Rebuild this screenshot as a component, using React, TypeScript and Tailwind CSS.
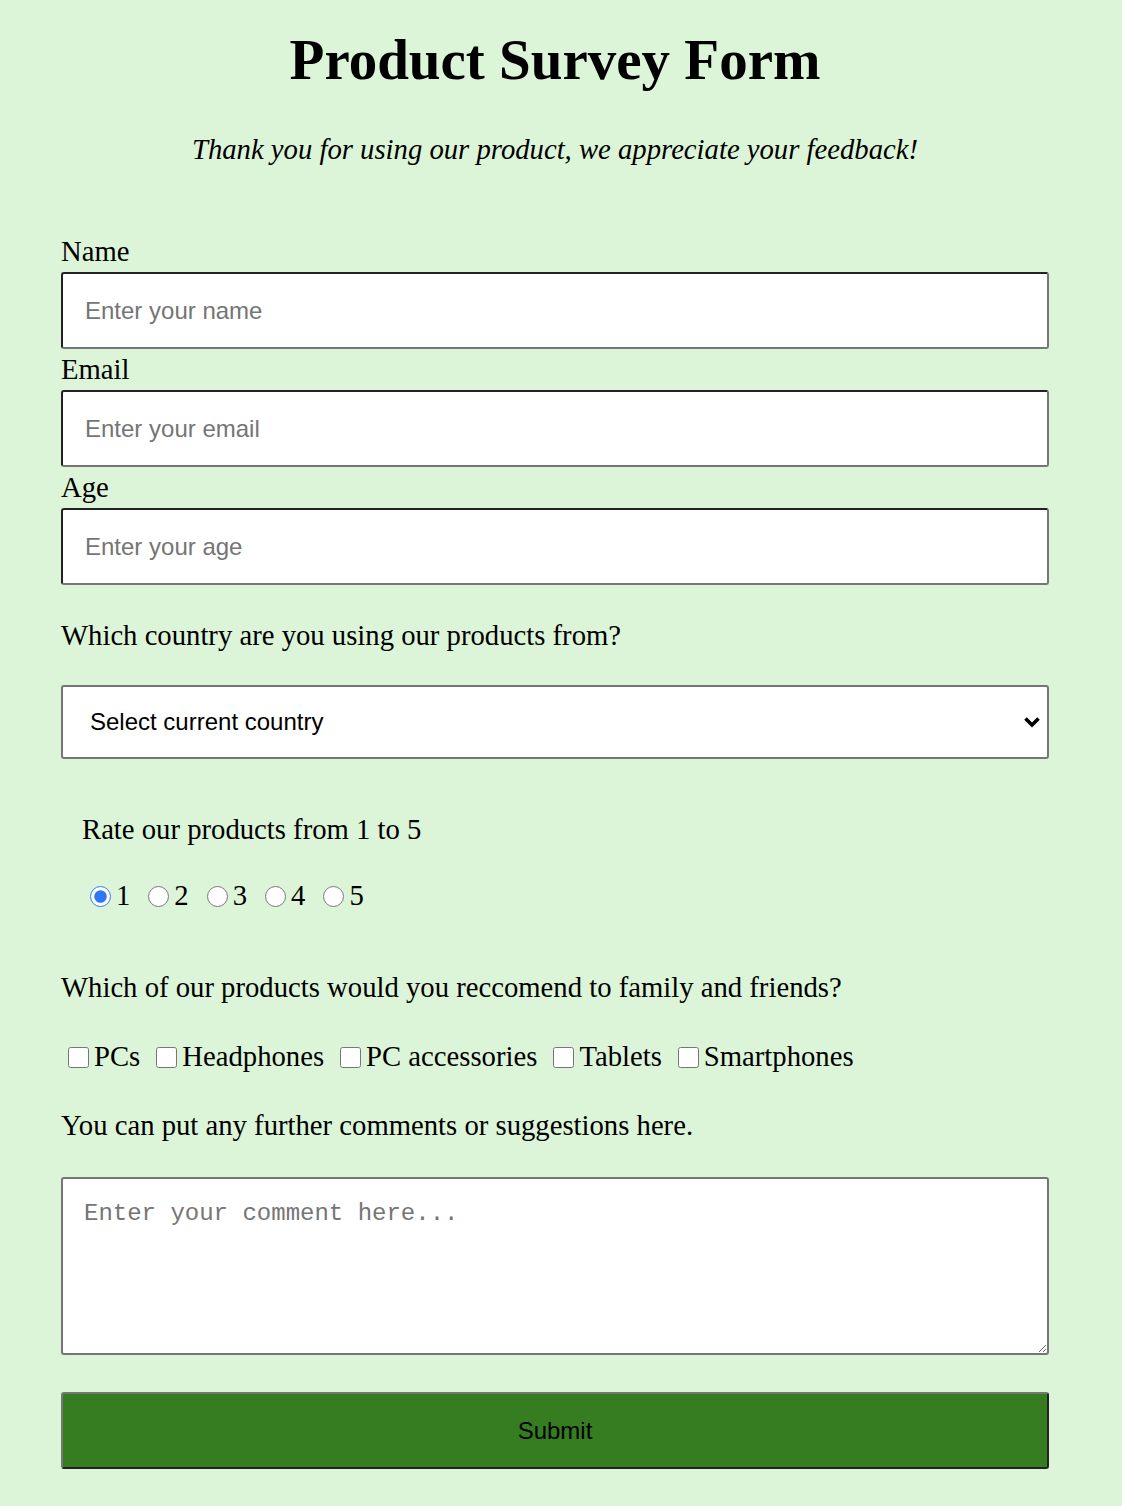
import React, { useState } from 'react';

const serif = "font-['Liberation_Serif','Times_New_Roman',serif]";

const ratings = [1, 2, 3, 4, 5];
const products = ['PCs', 'Headphones', 'PC accessories', 'Tablets', 'Smartphones'];

const SurveyForm = () => {
  const [rating, setRating] = useState(1);

  return (
    <div className={`min-h-screen bg-[#dcf5d8] text-black ${serif} text-[28.7px]`}>
      <div className="ml-[61px] w-[988px] pt-[25px]">
        {/* Header */}
        <h1 className="text-center text-[57px] font-bold leading-[70px]">Product Survey Form</h1>
        <p className="mt-[36px] text-center italic leading-[36px]">
          Thank you for using our product, we appreciate your feedback!
        </p>

        {/* Form */}
        <form className="mt-[64px]" onSubmit={(e) => e.preventDefault()}>
          <label htmlFor="name" className="block leading-[41px]">Name</label>
          <input
            id="name"
            type="text"
            placeholder="Enter your name"
            className="block h-[77px] w-full rounded-[3px] border-2 border-[#767676] border-t-[#222] border-l-[#222] bg-white pl-[22px] font-['Liberation_Sans',Arial,sans-serif] text-[24px] placeholder:text-[#757575] outline-none"
          />
          <label htmlFor="email" className="block leading-[41px]">Email</label>
          <input
            id="email"
            type="email"
            placeholder="Enter your email"
            className="block h-[77px] w-full rounded-[3px] border-2 border-[#767676] border-t-[#222] border-l-[#222] bg-white pl-[22px] font-['Liberation_Sans',Arial,sans-serif] text-[24px] placeholder:text-[#757575] outline-none"
          />
          <label htmlFor="age" className="block leading-[41px]">Age</label>
          <input
            id="age"
            type="number"
            placeholder="Enter your age"
            className="block h-[77px] w-full rounded-[3px] border-2 border-[#767676] border-t-[#222] border-l-[#222] bg-white pl-[22px] font-['Liberation_Sans',Arial,sans-serif] text-[24px] placeholder:text-[#757575] outline-none"
          />

          <p className="py-[29px] leading-[42px]">Which country are you using our products from?</p>

          <div className="relative">
            <select
              defaultValue=""
              className="block h-[74px] w-full appearance-none rounded-[3px] border-2 border-[#767676] bg-white pl-[27px] font-['Liberation_Sans',Arial,sans-serif] text-[24px] text-black outline-none"
            >
              <option value="">Select current country</option>
              <option>USA</option>
              <option>UK</option>
              <option>Other</option>
            </select>
            <svg
              className="pointer-events-none absolute right-[8px] top-1/2 -translate-y-1/2"
              width="18"
              height="12"
              viewBox="0 0 18 12"
            >
              <path d="M2.5 2.5 L9 9 L15.5 2.5" fill="none" stroke="#000" strokeWidth="3.6" />
            </svg>
          </div>

          {/* Rating */}
          <div className="mt-[49px] pl-[21px]">
            <p className="leading-[42px]">Rate our products from 1 to 5</p>
            <div className="mt-[25px] flex h-[42px] items-center gap-[10px]">
              {ratings.map((r) => (
                <label key={r} className="flex items-center">
                  <input
                    type="radio"
                    name="rating"
                    checked={rating === r}
                    onChange={() => setRating(r)}
                    className="ml-[8px] mr-[5px] h-[21px] w-[21px] accent-[#2f78f5]"
                  />
                  {r}
                </label>
              ))}
            </div>
          </div>

          {/* Recommendations */}
          <p className="mt-[49px] leading-[42px]">Which of our products would you reccomend to family and friends?</p>
          <div className="mt-[28px] flex h-[42px] items-center gap-[9px]">
            {products.map((p) => (
              <label key={p} className="flex items-center">
                <input type="checkbox" className="ml-[7px] mr-[5px] h-[21px] w-[21px]" />
                {p}
              </label>
            ))}
          </div>

          <p className="mt-[26px] leading-[42px]">You can put any further comments or suggestions here.</p>
          <textarea
            placeholder="Enter your comment here..."
            className="mt-[31px] block h-[178px] w-full rounded-[3px] border-2 border-[#767676] bg-white px-[21px] pt-[20px] font-['Liberation_Mono','Courier_New',monospace] text-[24px] leading-[30px] placeholder:text-[#757575] outline-none"
          />

          <button
            type="submit"
            className="mt-[37px] block h-[77px] w-full rounded-[3px] border-2 border-[#222] border-t-[#767676] border-l-[#767676] bg-[#367d22] font-['Liberation_Sans',Arial,sans-serif] text-[24px] text-black"
          >
            Submit
          </button>
        </form>
      </div>
    </div>
  );
};

export default SurveyForm;
